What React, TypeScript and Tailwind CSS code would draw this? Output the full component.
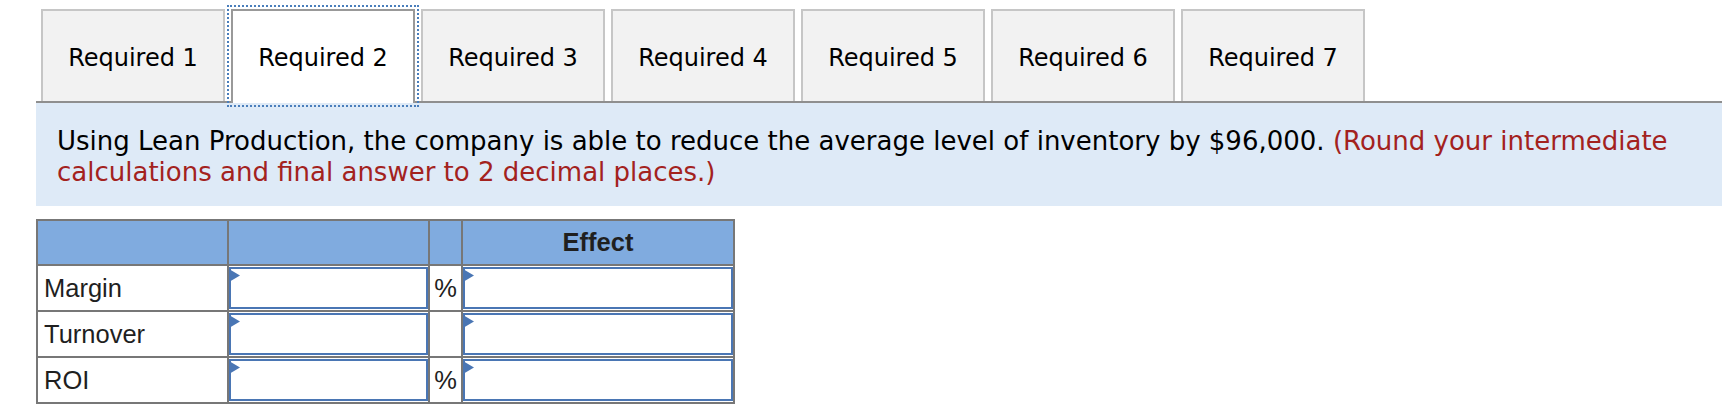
import React from "react";

const tabs = ["Required 1", "Required 2", "Required 3", "Required 4", "Required 5", "Required 6", "Required 7"];

function Flag() {
  return (
    <svg className="absolute left-[-2px] top-0" width="11" height="13" viewBox="0 0 11 13">
      <polygon points="0,0 11,6.5 0,13" fill="#4a76b4" />
    </svg>
  );
}

function InputBox() {
  return (
    <div className="relative h-[42px] w-full border-2 border-[#4a76b4] bg-white">
      <Flag />
    </div>
  );
}

const rows = [
  { label: "Margin", pct: true },
  { label: "Turnover", pct: false },
  { label: "ROI", pct: true },
];

export default function App() {
  return (
    <div className="min-h-[412px] bg-white pl-[36px] pt-[9px]">
      <div className="flex items-end gap-[6px] border-b-2 border-[#8f8f8f] pl-[5px]" style={{ fontFamily: '"DejaVu Sans", Verdana, sans-serif' }}>
        {tabs.map((t, i) =>
          i === 1 ? (
            <div
              key={t}
              className="relative z-10 -mb-[2px] flex h-[94px] w-[184px] items-center justify-center border-2 border-b-0 border-[#999999] bg-white pb-[0px] pt-[2px] text-[24px] text-black outline-2 outline-offset-[2px] outline-dotted outline-[#4a7ebb]"
            >
              {t}
            </div>
          ) : (
            <div
              key={t}
              className="flex h-[92px] w-[184px] items-center justify-center border-2 border-b-0 border-[#c6c6c6] bg-[#f2f2f2] pt-[4px] text-[24px] text-black"
            >
              {t}
            </div>
          )
        )}
      </div>
      <div
        className="bg-[#deeaf7] pb-[18px] pl-[21px] pr-[20px] pt-[23px] text-[26px] leading-[31px] text-black"
        style={{ fontFamily: '"DejaVu Sans", Verdana, sans-serif' }}
      >
        Using Lean Production, the company is able to reduce the average level of inventory by $96,000.{" "}
        <span className="text-[#a3221e]">(Round your intermediate calculations and final answer to 2 decimal places.)</span>
      </div>
      <table
        className="mt-[13px] border-collapse text-[25.5px] text-[#1f1f1f]"
        style={{ fontFamily: '"Liberation Sans", Arial, sans-serif' }}
      >
        <thead>
          <tr className="h-[45px] bg-[#80abdf]">
            <th className="w-[191px] border-2 border-[#777777] p-0"></th>
            <th className="w-[201px] border-2 border-[#777777] p-0"></th>
            <th className="w-[33px] border-2 border-[#777777] p-0"></th>
            <th className="w-[272px] border-2 border-[#777777] p-0 text-center font-bold">Effect</th>
          </tr>
        </thead>
        <tbody>
          {rows.map((r) => (
            <tr key={r.label} className="h-[46px]">
              <td className="border-2 border-[#777777] px-[6px] py-0 text-left">{r.label}</td>
              <td className="border-2 border-[#777777] p-0 align-middle">
                <InputBox />
              </td>
              <td className="border-2 border-[#777777] p-0 text-center">{r.pct ? "%" : ""}</td>
              <td className="border-2 border-[#777777] p-0 align-middle">
                <InputBox />
              </td>
            </tr>
          ))}
        </tbody>
      </table>
    </div>
  );
}
